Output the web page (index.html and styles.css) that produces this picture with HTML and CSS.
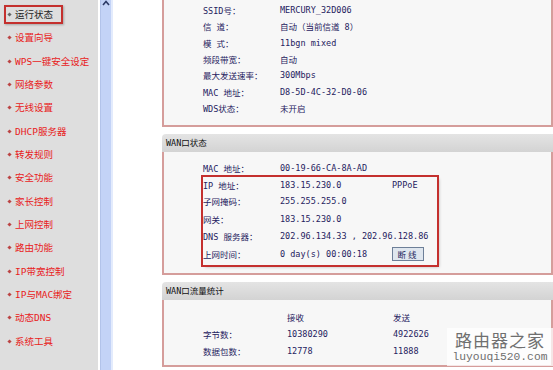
FILE: index.html
```html
<!DOCTYPE html>
<html lang="zh-CN">
<head>
    <meta charset="UTF-8">
    <title>运行状态</title>
    <link rel="stylesheet" href="styles.css">
</head>
<body>
    <div class="page">
        <!-- left menu -->
        <aside class="menu">
            <ul>
                <li class="current"><span class="dot"></span>运行状态</li>
                <li><span class="dot"></span>设置向导</li>
                <li><span class="dot"></span>WPS一键安全设定</li>
                <li><span class="dot"></span>网络参数</li>
                <li><span class="dot"></span>无线设置</li>
                <li><span class="dot"></span>DHCP服务器</li>
                <li><span class="dot"></span>转发规则</li>
                <li><span class="dot"></span>安全功能</li>
                <li><span class="dot"></span>家长控制</li>
                <li><span class="dot"></span>上网控制</li>
                <li><span class="dot"></span>路由功能</li>
                <li><span class="dot"></span>IP带宽控制</li>
                <li><span class="dot"></span>IP与MAC绑定</li>
                <li><span class="dot"></span>动态DNS</li>
                <li><span class="dot"></span>系统工具</li>
            </ul>
        </aside>

        <div class="scrollbar">
            <svg class="arrow" width="8" height="6" viewBox="0 0 8 6">
                <path d="M1 5 L4 1.5 L7 5" fill="none" stroke="#2c3a66" stroke-width="1.6"/>
            </svg>
        </div>

        <main class="content">
            <!-- wireless status (scrolled, top cut off) -->
            <section class="panel first">
                <div class="panel-body">
                    <div class="kv">
                        <span>SSID号：</span><span>MERCURY_32D006</span><span></span>
                        <span>信 道：</span><span class="wide">自动（当前信道 8）</span>
                        <span>模 式：</span><span>11bgn mixed</span><span></span>
                        <span>频段带宽：</span><span>自动</span><span></span>
                        <span>最大发送速率：</span><span>300Mbps</span><span></span>
                        <span>MAC 地址：</span><span class="wide">D8-5D-4C-32-D0-06</span>
                        <span>WDS状态：</span><span>未开启</span><span></span>
                    </div>
                </div>
            </section>

            <!-- WAN status -->
            <section class="panel">
                <div class="panel-head">WAN口状态</div>
                <div class="panel-body wan">
                    <div class="kv">
                        <span>MAC 地址：</span><span class="wide">00-19-66-CA-8A-AD</span>
                    </div>
                    <div class="highlight">
                        <div class="kv tall">
                            <span>IP 地址：</span><span>183.15.230.0</span><span>PPPoE</span>
                            <span>子网掩码：</span><span>255.255.255.0</span><span></span>
                            <span>网关：</span><span>183.15.230.0</span><span></span>
                            <span>DNS 服务器：</span><span class="wide">202.96.134.33 , 202.96.128.86</span>
                            <span>上网时间：</span><span>0 day(s) 00:00:18</span><span><button class="btn">断线</button></span>
                        </div>
                    </div>
                </div>
            </section>

            <!-- WAN traffic -->
            <section class="panel">
                <div class="panel-head">WAN口流量统计</div>
                <div class="panel-body traffic">
                    <div class="kv stats">
                        <span></span><span>接收</span><span>发送</span>
                        <span>字节数：</span><span>10380290</span><span>4922626</span>
                        <span>数据包数：</span><span>12778</span><span>11888</span>
                    </div>
                </div>
            </section>

            <div class="watermark">
                <div class="wm-cn">路由器之家</div>
                <div class="wm-en">luyouqi520.com</div>
            </div>
        </main>
    </div>
</body>
</html>
```

FILE: styles.css
```css
body {
    margin: 0;
    padding: 0;
    background: #fff;
    font-family: "DejaVu Sans Mono", "Noto Sans CJK SC", monospace;
    overflow: hidden;
}
.page {
    display: flex;
    width: 553px;
    height: 370px;
    overflow: hidden;
}

/* left menu */
.menu {
    width: 98px;
    flex-shrink: 0;
    background: #dedede;
}
.menu ul {
    list-style: none;
    margin: 0;
    padding: 3px 0 0 0;
}
.menu li {
    position: relative;
    height: 23.33px;
    line-height: 23.33px;
    padding-left: 15px;
    font-size: 9.5px;
    color: #e81c1c;
    white-space: nowrap;
}
.menu li .dot {
    position: absolute;
    left: 8px;
    top: 10px;
    width: 3px;
    height: 3px;
    background: #b44;
    transform: rotate(45deg);
}
.menu li.current {
    color: #222;
}
.menu li.current .dot {
    background: #666;
}
.menu li.current::after {
    content: "";
    position: absolute;
    left: 4px;
    top: 2px;
    width: 55px;
    height: 15px;
    border: 2px solid #c4302e;
    box-shadow: 1px 1px 2px rgba(0, 0, 0, 0.25);
}

/* scrollbar strip */
.scrollbar {
    width: 10px;
    flex-shrink: 0;
    margin-left: 2px;
    background: #c3d3f7;
    border-left: 1px solid #b2c3ea;
    border-right: 2px solid #e3ebfc;
    position: relative;
}
.arrow {
    position: absolute;
    left: 1px;
    top: 0;
}

/* main content */
.content {
    flex: 1;
    position: relative;
    padding-left: 49px;
    font-size: 8.5px;
    color: #1f2260;
}
.panel {
    margin-bottom: 7px;
}
.panel-head {
    height: 18px;
    line-height: 18px;
    padding-left: 4px;
    background: linear-gradient(#e4e4e4, #d3d3d3);
    border-radius: 4px 0 0 0;
    color: #111;
}
.panel-body {
    background: #f7f7f7;
    border: 2px solid #d59d9b;
    border-top: none;
    padding: 2px 0 9px 39px;
}
.kv {
    display: grid;
    grid-template-columns: 77px 112px 1fr;
    grid-auto-rows: 16.33px;
    align-items: center;
    white-space: nowrap;
}
.kv .wide {
    grid-column: 2 / 4;
}

/* WAN block */
.panel-body.wan {
    padding-top: 8px;
    padding-bottom: 8px;
}
.highlight {
    width: 234px;
    outline: 2px solid #c4302e;
    box-shadow: 2px 2px 3px rgba(0, 0, 0, 0.25);
    padding-bottom: 2px;
}
.kv.tall {
    grid-auto-rows: 17.5px;
    grid-template-rows: 16px;
}
.btn {
    display: block;
    width: 32px;
    height: 14px;
    padding: 0;
    background: #dfe6ee;
    border: 1px solid #6d7f98;
    font-family: "Noto Sans CJK SC", sans-serif;
    font-size: 8.5px;
    letter-spacing: 2px;
    color: #1f2a60;
    line-height: 12px;
}

/* traffic block */
.panel-body.traffic {
    padding-top: 9px;
    padding-bottom: 5px;
    height: 51px;
}
.kv.stats {
    grid-template-columns: 84px 106px 1fr;
    grid-auto-rows: 17px;
}

/* watermark */
.watermark {
    position: absolute;
    right: 0;
    bottom: 4px;
    width: 106px;
    padding: 2px 0;
    text-align: center;
    background: rgba(255, 255, 255, 0.75);
    color: #6f6f6f;
}
.wm-cn {
    font-family: "Noto Sans CJK SC", sans-serif;
    font-size: 17px;
    line-height: 20px;
    letter-spacing: 1px;
}
.wm-en {
    font-family: "Liberation Mono", monospace;
    font-size: 11.3px;
    line-height: 14px;
}
```
